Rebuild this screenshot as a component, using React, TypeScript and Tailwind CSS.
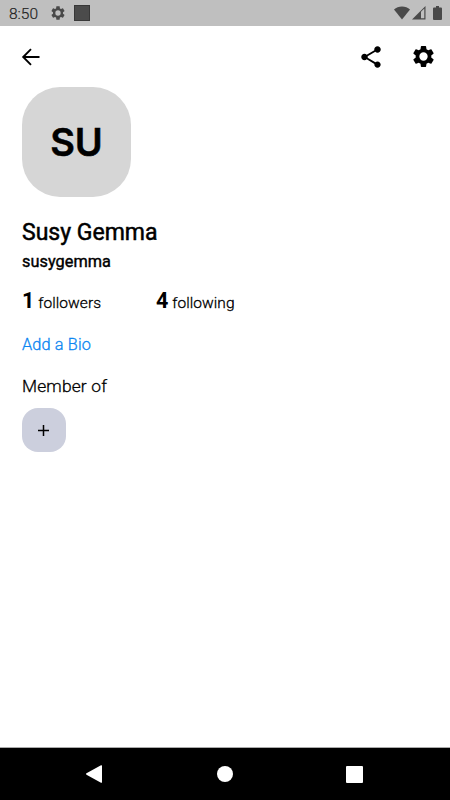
import React from "react";
import { MdShare } from "react-icons/md";

function Gear({ className }: { className?: string }) {
  return (
    <svg className={className} viewBox="0 0 24 24" fill="currentColor">
      <path d="M19.430 12.980c.04-.32.07-.64.07-.98s-.03-.66-.07-.98l2.110-1.650c.19-.15.24-.42.12-.64l-2-3.460c-.12-.22-.39-.3-.61-.22l-2.490 1c-.52-.4-1.080-.73-1.690-.98l-.38-2.650C14.460 2.180 14.250 2 14 2h-4c-.25 0-.46.18-.49.42l-.38 2.650c-.61.25-1.170.59-1.690.98l-2.490-1c-.23-.09-.49 0-.61.22l-2 3.460c-.13.22-.07.49.12.64l2.110 1.650c-.04.32-.07.65-.07.98s.03.66.07.98l-2.110 1.650c-.19.15-.24.42-.12.64l2 3.460c.12.22.39.3.61.22l2.490-1c.52.4 1.080.73 1.690.98l.38 2.650c.03.24.24.42.49.42h4c.25 0 .46-.18.49-.42l.38-2.650c.61-.25 1.170-.59 1.690-.98l2.490 1c.23.09.49 0 .61-.22l2-3.460c.12-.22.07-.49-.12-.64zM12 16a4 4 0 1 1 0-8 4 4 0 0 1 0 8z" />
    </svg>
  );
}

function StatusBar() {
  return (
    <div className="flex h-[26px] shrink-0 items-center bg-[#bfbfbf] pl-[9px] text-[#494949]">
      <span className="w-[41px] pt-px text-[15.500px] leading-[26px] font-light text-[#222] [-webkit-text-stroke:0.2px_#222]">8:50</span>
      <Gear className="size-4" />
      <div className="ml-2 size-4 border border-[#383838] bg-[#4b4b4b]" />
      <svg className="ml-auto h-[14px] w-4" viewBox="0 0 16 14" fill="currentColor">
        <path d="M8 13.500 0 3.400C2.100 1.600 4.900.5 8 .5s5.900 1.100 8 2.900z" />
      </svg>
      <svg className="ml-[2px] h-[14px] w-[14px]" viewBox="0 0 14 14">
        <path d="M0 13.500 13.500 0v13.500z" fill="#494949" />
        <path d="M9 5.800 12.300 2.500v9.800H9z" fill="#bfbfbf" />
      </svg>
      <svg className="ml-[7px] mr-[8px] h-[14px] w-[9px]" viewBox="0 0 9 14" fill="currentColor">
        <path d="M3 0h3v1.500h2q1 0 1 1V13q0 1-1 1H1q-1 0-1-1V2.500q0-1 1-1h2z" />
      </svg>
    </div>
  );
}

function Header() {
  return (
    <header className="flex h-[61px] shrink-0 items-center pr-[14px] pl-[21px]">
      <svg className="h-[18px] w-5" viewBox="0 0 20 18" fill="none" stroke="#000" strokeWidth="1.900">
        <path d="M18.500 9H2.500M10 1.200 2.200 9l7.800 7.800" />
      </svg>
      <MdShare className="ml-auto size-[26px]" />
      <Gear className="ml-[27px] size-[25px]" />
    </header>
  );
}

function Stat({ count, label, className }: { count: number; label: string; className?: string }) {
  return (
    <div className={className}>
      <span className="text-[21.500px] font-bold">{count}</span>
      <span className="ml-1 text-[15.500px] font-light tracking-[0.05px] [-webkit-text-stroke:0.3px_#000]">{label}</span>
    </div>
  );
}

function NavBar() {
  return (
    <nav className="flex h-[53px] shrink-0 items-center border-t border-[#aaa] bg-black pr-[87px] pl-[86px]">
      <svg className="h-[18px] w-4" viewBox="0 0 16 18" fill="#fff">
        <path d="M15 .3Q16-.2 16 1v16q0 1.200-1 .7L.5 9.700Q-.5 9 .5 8.300z" />
      </svg>
      <div className="ml-[115px] size-4 rounded-full bg-white" />
      <div className="ml-auto size-[17px] rounded-[1px] bg-white" />
    </nav>
  );
}

export default function App() {
  return (
    <div className="flex h-[800px] w-[450px] flex-col overflow-hidden bg-white font-['Roboto',sans-serif] text-black">
      <StatusBar />
      <Header />
      <main className="flex grow flex-col items-start px-[22px]">
        <div className="flex h-[110px] w-[109px] items-center justify-center rounded-[38px] bg-[#d6d6d6] pt-px font-['Inter',sans-serif] text-[38px] font-semibold [-webkit-text-stroke:0.5px_#000]">
          SU
        </div>
        <h1 className="mt-[21px] text-[23px] leading-[30px] font-normal [-webkit-text-stroke:0.5px_#000]">Susy Gemma</h1>
        <p className="mt-1 text-[16.300px] leading-5 font-normal tracking-[0.05px] [-webkit-text-stroke:0.4px_#000]">susygemma</p>
        <div className="mt-[14px] flex h-[30px] leading-[30px]">
          <Stat className="w-[134px]" count={1} label="followers" />
          <Stat count={4} label="following" />
        </div>
        <a className="mt-[19px] text-[16.300px] leading-5 font-light tracking-[0.15px] text-[#0c86f2] [-webkit-text-stroke:0.3px_#0c86f2]">Add a Bio</a>
        <h2 className="mt-[21px] text-[17.400px] leading-5 font-light tracking-[0.15px] [-webkit-text-stroke:0.3px_#000]">Member of</h2>
        <button className="mt-3 flex size-11 items-center justify-center rounded-2xl bg-[#cccfdd]">
          <svg className="size-3" viewBox="0 0 12 12" stroke="#000" strokeWidth="1.500">
            <path d="M5.500 .9v11M0 6.400h11" />
          </svg>
        </button>
      </main>
      <NavBar />
    </div>
  );
}
